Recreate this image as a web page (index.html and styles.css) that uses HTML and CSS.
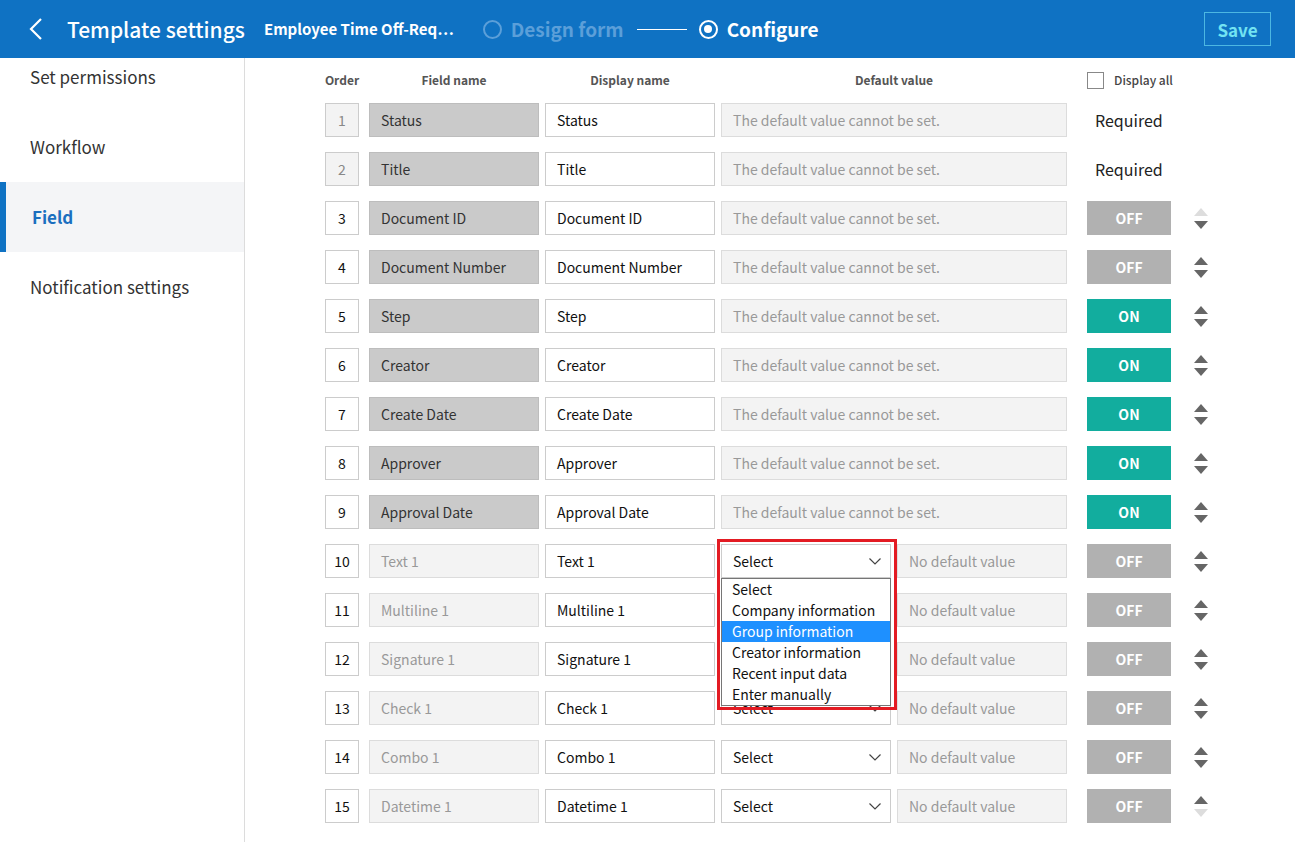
FILE: index.html
```html
<!DOCTYPE html>
<html>
<head>
<meta charset="utf-8">
<link rel="stylesheet" href="styles.css">
</head>
<body>
<header class="topbar">
  <div class="back"><svg width="14" height="22" viewBox="0 0 14 22"><path d="M12 1 L2 11 L12 21" fill="none" stroke="#fff" stroke-width="2.2"/></svg></div>
  <div class="title">Template settings</div>
  <div class="docname">Employee Time Off-Req…</div>
  <div class="steps">
    <div class="step faded"><span class="radio"></span>Design form</div>
    <span class="line"></span>
    <div class="step cur"><span class="radio on"></span>Configure</div>
  </div>
  <button class="save">Save</button>
</header>
<div class="body">
  <nav class="side">
    <div class="item first">Set permissions</div>
    <div class="item">Workflow</div>
    <div class="item active">Field</div>
    <div class="item">Notification settings</div>
  </nav>
  <main class="main">
    <div class="row head">
      <div class="ord">Order</div>
      <div class="c170">Field name</div>
      <div class="c170">Display name</div>
      <div class="c346">Default value</div>
      <label class="all"><span class="chk"></span>Display all</label>
    </div>

    <div class="row">
      <div class="ord fixed">1</div>
      <div class="fname">Status</div>
      <div class="dname">Status</div>
      <div class="defv">The default value cannot be set.</div>
      <div class="req">Required</div>
    </div>
    <div class="row">
      <div class="ord fixed">2</div>
      <div class="fname">Title</div>
      <div class="dname">Title</div>
      <div class="defv">The default value cannot be set.</div>
      <div class="req">Required</div>
    </div>
    <div class="row">
      <div class="ord">3</div>
      <div class="fname">Document ID</div>
      <div class="dname">Document ID</div>
      <div class="defv">The default value cannot be set.</div>
      <div class="tog off">OFF</div>
      <div class="sort"><span class="up dis"></span><span class="down"></span></div>
    </div>
    <div class="row">
      <div class="ord">4</div>
      <div class="fname">Document Number</div>
      <div class="dname">Document Number</div>
      <div class="defv">The default value cannot be set.</div>
      <div class="tog off">OFF</div>
      <div class="sort"><span class="up"></span><span class="down"></span></div>
    </div>
    <div class="row">
      <div class="ord">5</div>
      <div class="fname">Step</div>
      <div class="dname">Step</div>
      <div class="defv">The default value cannot be set.</div>
      <div class="tog on">ON</div>
      <div class="sort"><span class="up"></span><span class="down"></span></div>
    </div>
    <div class="row">
      <div class="ord">6</div>
      <div class="fname">Creator</div>
      <div class="dname">Creator</div>
      <div class="defv">The default value cannot be set.</div>
      <div class="tog on">ON</div>
      <div class="sort"><span class="up"></span><span class="down"></span></div>
    </div>
    <div class="row">
      <div class="ord">7</div>
      <div class="fname">Create Date</div>
      <div class="dname">Create Date</div>
      <div class="defv">The default value cannot be set.</div>
      <div class="tog on">ON</div>
      <div class="sort"><span class="up"></span><span class="down"></span></div>
    </div>
    <div class="row">
      <div class="ord">8</div>
      <div class="fname">Approver</div>
      <div class="dname">Approver</div>
      <div class="defv">The default value cannot be set.</div>
      <div class="tog on">ON</div>
      <div class="sort"><span class="up"></span><span class="down"></span></div>
    </div>
    <div class="row">
      <div class="ord">9</div>
      <div class="fname">Approval Date</div>
      <div class="dname">Approval Date</div>
      <div class="defv">The default value cannot be set.</div>
      <div class="tog on">ON</div>
      <div class="sort"><span class="up"></span><span class="down"></span></div>
    </div>
    <div class="row">
      <div class="ord">10</div>
      <div class="fname user">Text 1</div>
      <div class="dname">Text 1</div>
      <div class="selwrap">
        <div class="sel">Select<svg class="chev" width="12" height="7" viewBox="0 0 12 7"><path d="M0.5 0.5 L6 6 L11.5 0.5" fill="none" stroke="#444" stroke-width="1.2"/></svg></div>
        <ul class="menu">
          <li>Select</li>
          <li>Company information</li>
          <li class="hl">Group information</li>
          <li>Creator information</li>
          <li>Recent input data</li>
          <li>Enter manually</li>
        </ul>
        <div class="mark"></div>
      </div>
      <div class="nodef">No default value</div>
      <div class="tog off">OFF</div>
      <div class="sort"><span class="up"></span><span class="down"></span></div>
    </div>
    <div class="row">
      <div class="ord">11</div>
      <div class="fname user">Multiline 1</div>
      <div class="dname">Multiline 1</div>
      <div class="sel">Select<svg class="chev" width="12" height="7" viewBox="0 0 12 7"><path d="M0.5 0.5 L6 6 L11.5 0.5" fill="none" stroke="#444" stroke-width="1.2"/></svg></div>
      <div class="nodef">No default value</div>
      <div class="tog off">OFF</div>
      <div class="sort"><span class="up"></span><span class="down"></span></div>
    </div>
    <div class="row">
      <div class="ord">12</div>
      <div class="fname user">Signature 1</div>
      <div class="dname">Signature 1</div>
      <div class="sel">Select<svg class="chev" width="12" height="7" viewBox="0 0 12 7"><path d="M0.5 0.5 L6 6 L11.5 0.5" fill="none" stroke="#444" stroke-width="1.2"/></svg></div>
      <div class="nodef">No default value</div>
      <div class="tog off">OFF</div>
      <div class="sort"><span class="up"></span><span class="down"></span></div>
    </div>
    <div class="row">
      <div class="ord">13</div>
      <div class="fname user">Check 1</div>
      <div class="dname">Check 1</div>
      <div class="sel">Select<svg class="chev" width="12" height="7" viewBox="0 0 12 7"><path d="M0.5 0.5 L6 6 L11.5 0.5" fill="none" stroke="#444" stroke-width="1.2"/></svg></div>
      <div class="nodef">No default value</div>
      <div class="tog off">OFF</div>
      <div class="sort"><span class="up"></span><span class="down"></span></div>
    </div>
    <div class="row">
      <div class="ord">14</div>
      <div class="fname user">Combo 1</div>
      <div class="dname">Combo 1</div>
      <div class="sel">Select<svg class="chev" width="12" height="7" viewBox="0 0 12 7"><path d="M0.5 0.5 L6 6 L11.5 0.5" fill="none" stroke="#444" stroke-width="1.2"/></svg></div>
      <div class="nodef">No default value</div>
      <div class="tog off">OFF</div>
      <div class="sort"><span class="up"></span><span class="down"></span></div>
    </div>
    <div class="row">
      <div class="ord">15</div>
      <div class="fname user">Datetime 1</div>
      <div class="dname">Datetime 1</div>
      <div class="sel">Select<svg class="chev" width="12" height="7" viewBox="0 0 12 7"><path d="M0.5 0.5 L6 6 L11.5 0.5" fill="none" stroke="#444" stroke-width="1.2"/></svg></div>
      <div class="nodef">No default value</div>
      <div class="tog off">OFF</div>
      <div class="sort"><span class="up"></span><span class="down dis"></span></div>
    </div>
  </main>
</div>
</body>
</html>
```
FILE: styles.css
```css
* { box-sizing: border-box; }
html, body { margin: 0; padding: 0; }
body {
  font-family: "Noto Sans CJK KR", "Noto Sans", sans-serif;
  color: #222;
  background: #fff;
  width: 1295px;
  height: 842px;
  overflow: hidden;
}
.topbar {
  height: 58px;
  background: #0f72c3;
  display: flex;
  align-items: center;
  color: #fff;
}
.back { width: 30px; margin-left: 29px; margin-right: 8px; display: flex; align-items: center; height: 22px; }
.title { font-size: 21px; font-weight: 500; line-height: 30px; margin-right: 19px; }
.docname { font-size: 15px; font-weight: 700; line-height: 24px; white-space: nowrap; margin-right: 29px; }
.steps { display: flex; align-items: center; }
.step { display: flex; align-items: center; font-size: 19px; font-weight: 700; line-height: 28px; }
.step.faded { color: #5b9fd9; }
.radio {
  width: 19px; height: 19px; border-radius: 50%;
  border: 2px solid currentColor; margin-right: 9px;
  display: flex; align-items: center; justify-content: center;
}
.radio.on::after { content: ""; width: 8px; height: 8px; border-radius: 50%; background: #fff; }
.line { width: 50px; height: 1px; background: #fff; margin: 0 12px 0 13px; }
.save {
  margin-left: auto; margin-right: 24px;
  width: 67px; height: 34px;
  background: transparent;
  border: 1px solid #4cb7e2;
  color: #72e3f2;
  font-family: inherit; font-size: 17px; font-weight: 700;
  padding: 0;
}
.body { display: flex; height: 784px; }
.side { width: 245px; border-right: 1px solid #dcdcdc; flex: none; }
.item {
  height: 70px; display: flex; align-items: center;
  padding-left: 30px; font-size: 17px; color: #333; line-height: 24px;
}
.item.first { height: 54px; padding-bottom: 16px; }
.item.active {
  background: #f4f5f7; color: #1b6fbf; font-weight: 700;
  border-left: 6px solid #0f72c3; padding-left: 26px;
}
.main { padding: 5px 0 0 80px; flex: 1; }
.row { display: flex; align-items: center; height: 34px; margin-bottom: 15px; font-size: 14px; line-height: 20px; }
.row.head { margin-bottom: 6px; font-size: 12px; font-weight: 700; color: #555; }
.row.head > div { text-align: center; }
.ord {
  width: 34px; height: 34px; flex: none;
  display: flex; align-items: center; justify-content: center;
  margin-right: 10px;
}
.row:not(.head) .ord { border: 1px solid #ccc; background: #fff; color: #111; }
.row .ord.fixed { background: #f3f3f3; color: #888; }
.c170 { width: 170px; margin-right: 6px; }
.c346 { width: 346px; margin-right: 20px; }
.all { display: flex; align-items: center; font-weight: 500; color: #444; font-size: 12px; }
.chk { width: 17px; height: 17px; border: 1px solid #888; margin-right: 10px; background: #fff; }
.fname, .dname, .defv, .sel, .nodef {
  height: 34px; display: flex; align-items: center; padding-left: 11px; flex: none;
}
.fname { width: 170px; margin-right: 6px; background: #cacaca; border: 1px solid #bdbdbd; color: #333; }
.fname.user { background: #f3f3f3; border-color: #dcdcdc; color: #999; }
.dname { width: 170px; margin-right: 6px; background: #fff; border: 1px solid #ccc; color: #111; }
.defv { width: 346px; margin-right: 20px; background: #f3f3f3; border: 1px solid #dcdcdc; color: #999; }
.selwrap { position: relative; width: 170px; margin-right: 6px; flex: none; }
.sel { width: 170px; background: #fff; border: 1px solid #ccc; color: #111; justify-content: space-between; padding-right: 9px; }
.row > .sel { margin-right: 6px; }
.chev { display: block; }
.nodef { width: 170px; margin-right: 20px; background: #f3f3f3; border: 1px solid #dcdcdc; color: #999; }
.menu {
  position: absolute; left: 0; top: 34px; width: 170px;
  margin: 0; padding: 0; list-style: none;
  background: #fff; border: 1px solid #767676; z-index: 2;
}
.menu li { height: 21px; line-height: 21px; padding-left: 10px; color: #111; white-space: nowrap; }
.menu li.hl { background: #1e90ff; color: #fff; }
.mark {
  position: absolute; left: -4px; top: -5px; width: 180px; height: 171px;
  border: 3px solid #e31b23; z-index: 3; pointer-events: none;
}
.req { font-size: 16px; color: #222; padding-left: 8px; line-height: 24px; }
.tog {
  width: 84px; height: 34px; flex: none;
  display: flex; align-items: center; justify-content: center;
  color: #fff; font-weight: 700; font-size: 14px; margin-right: 22px;
}
.tog.off { background: #b1b1b1; }
.tog.on { background: #12ad9e; }
.sort { display: flex; flex-direction: column; align-items: center; gap: 5px; width: 16px; }
.up, .down { width: 0; height: 0; border-left: 7.5px solid transparent; border-right: 7.5px solid transparent; }
.up { border-bottom: 8px solid #666; }
.down { border-top: 8px solid #666; }
.up.dis { border-bottom-color: #ddd; }
.down.dis { border-top-color: #ddd; }
```
